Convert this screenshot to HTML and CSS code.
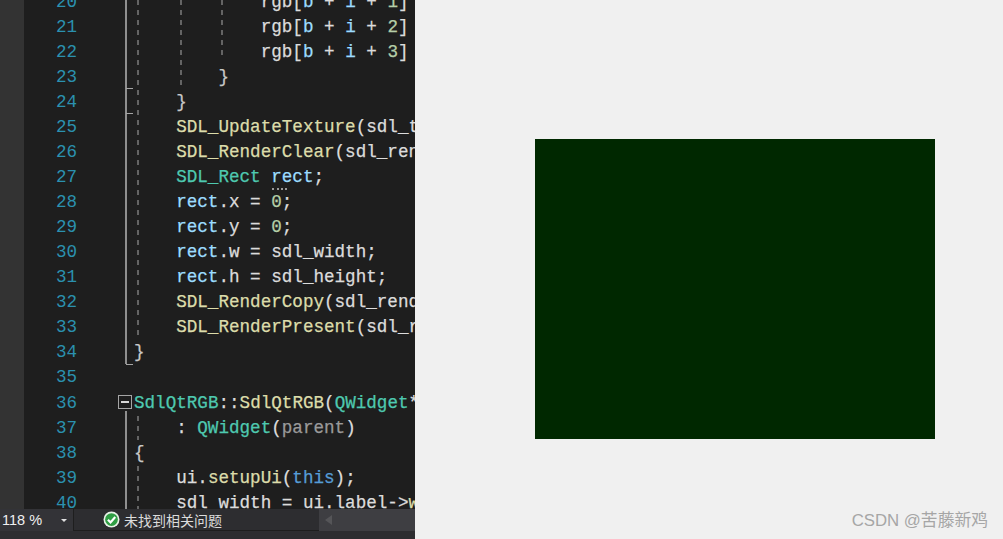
FILE: index.html
```html
<!DOCTYPE html>
<html lang="zh">
<head>
<meta charset="utf-8">
<title>SdlQtRGB</title>
<link rel="stylesheet" href="styles.css">
</head>
<body>
<div class="app">
  <section class="editor">
    <div class="pane">
      <div class="gutter"></div>
      <div class="numbers">
        <div>20</div><div>21</div><div>22</div><div>23</div><div>24</div><div>25</div><div>26</div><div>27</div><div>28</div><div>29</div><div>30</div><div>31</div><div>32</div><div>33</div><div>34</div><div>35</div><div>36</div><div>37</div><div>38</div><div>39</div><div>40</div>
      </div>
      <div class="code">
        <div class="i12">rgb[<span class="v">b</span> + <span class="v">i</span> + <span class="n">1</span>] = 0;</div>
        <div class="i12">rgb[<span class="v">b</span> + <span class="v">i</span> + <span class="n">2</span>] = 0;</div>
        <div class="i12">rgb[<span class="v">b</span> + <span class="v">i</span> + <span class="n">3</span>] = 0;</div>
        <div class="i8 p">}</div>
        <div class="i4 p">}</div>
        <div class="i4"><span class="f">SDL_UpdateTexture</span>(sdl_texture</div>
        <div class="i4"><span class="f">SDL_RenderClear</span>(sdl_render</div>
        <div class="i4"><span class="t">SDL_Rect</span> <span class="v squiggle">rect</span>;</div>
        <div class="i4"><span class="v">rect</span>.x = <span class="n">0</span>;</div>
        <div class="i4"><span class="v">rect</span>.y = <span class="n">0</span>;</div>
        <div class="i4"><span class="v">rect</span>.w = sdl_width;</div>
        <div class="i4"><span class="v">rect</span>.h = sdl_height;</div>
        <div class="i4"><span class="f">SDL_RenderCopy</span>(sdl_render</div>
        <div class="i4"><span class="f">SDL_RenderPresent</span>(sdl_render</div>
        <div class="p">}</div>
        <div>&nbsp;</div>
        <div><span class="t">SdlQtRGB</span>::<span class="f">SdlQtRGB</span>(<span class="t">QWidget</span>* parent)</div>
        <div class="i4">: <span class="t">QWidget</span>(<span class="g">parent</span>)</div>
        <div class="p">{</div>
        <div class="i4">ui.<span class="f">setupUi</span>(<span class="k">this</span>);</div>
        <div class="i4">sdl_width = ui.label-&gt;<span class="f">width</span>();</div>
      </div>
      <i class="fold fold-a"></i>
      <i class="tick tick-a"></i>
      <i class="tick tick-b"></i>
      <i class="tick tick-c"></i>
      <i class="fold fold-b"></i>
      <i class="guide guide-a"></i>
      <i class="guide guide-b"></i>
      <i class="guide guide-c"></i>
      <i class="guide guide-d"></i>
      <i class="guide guide-e"></i>
      <span class="box"><i></i></span>
    </div>
    <footer class="status">
      <div class="status-row">
        <div class="zoom"><span>118 %</span><i class="caret"></i></div>
        <div class="issues">
          <svg class="ok" width="17" height="17" viewBox="0 0 16 16"><circle cx="8" cy="8" r="7.5" fill="#e8f3e8"/><circle cx="8" cy="8" r="6" fill="#2f9e44"/><path d="M4.6 8.2 7.1 10.7 11.5 5.6" fill="none" stroke="#fff" stroke-width="2"/></svg>
          <span>未找到相关问题</span>
        </div>
        <div class="hscroll"><i class="arrow"></i></div>
      </div>
      <div class="status-foot"></div>
    </footer>
  </section>
  <section class="preview">
    <div class="canvas"></div>
    <div class="mark">CSDN @苦藤新鸡</div>
  </section>
</div>
</body>
</html>
```
FILE: styles.css
```css
* { box-sizing: border-box; }
html, body { margin: 0; height: 100%; }
body { background: #f0f0f0; overflow: hidden; }
.app { display: flex; width: 1003px; height: 539px; }

.editor { width: 415px; height: 539px; display: flex; flex-direction: column; background: #1e1e1e; overflow: hidden; }
.pane { position: relative; flex: 1; min-height: 0; display: flex; overflow: hidden; font: 17.6px/25.07px "Liberation Mono", "DejaVu Sans Mono", monospace; }
.gutter { width: 24px; flex: none; background: #333333; }
.numbers { width: 53px; flex: none; margin-top: -10.5px; text-align: right; color: #2b91af; }
.code { flex: none; width: 400px; margin: -10.5px 0 0 57px; color: #dcdcdc; -webkit-text-stroke: 0.25px; }
.code > div { height: 25.07px; white-space: pre; }
.i4 { padding-left: 42.2px; }
.i8 { padding-left: 84.4px; }
.i12 { padding-left: 126.7px; }
.v { color: #9cdcfe; }
.n { color: #b5cea8; }
.f { color: #dcdcaa; }
.t { color: #4ec9b0; }
.k { color: #569cd6; }
.g { color: #9a9a9a; }
.p { color: #c8c8c8; }
.squiggle { position: relative; }
.squiggle::after { content: ""; position: absolute; left: 1px; top: 21px; width: 15px; border-top: 2px dotted #9a9a9a; }

.fold { position: absolute; left: 125px; width: 2px; background: #8f8f8f; }
.fold-a { top: 0; height: 364px; }
.fold-b { top: 411px; height: 98px; }
.tick { position: absolute; left: 126px; width: 7px; height: 1px; background: #a5a5a5; }
.tick-a { top: 88px; }
.tick-b { top: 113px; }
.tick-c { top: 364px; }
.guide { position: absolute; width: 2px; background: repeating-linear-gradient(to bottom, #646464 0 5px, transparent 5px 10px); }
.guide-a { left: 137px; top: 0; height: 338px; }
.guide-b { left: 180px; top: 0; height: 88px; }
.guide-c { left: 221px; top: 0; height: 58px; }
.guide-d { left: 137px; top: 416px; height: 24px; }
.guide-e { left: 137px; top: 466px; height: 43px; }
.box { position: absolute; left: 118px; top: 395px; width: 14px; height: 14px; border: 1px solid #a5a5a5; display: flex; align-items: center; justify-content: center; }
.box i { width: 8px; height: 2px; background: #d8d8d8; }

.status { flex: none; height: 30px; background: #2d2d30; }
.status-row { display: flex; height: 22px; }
.zoom { width: 74px; display: flex; align-items: center; justify-content: space-between; padding: 0 3px 0 2px; background: #333337; border-right: 1px solid #1e1e1e; color: #f0f0f0; font: 14.5px "Liberation Sans", sans-serif; }
.caret { width: 0; height: 0; margin-right: 3px; border: 3px solid transparent; border-top: 3px solid #e0e0e0; border-bottom: 0; }
.issues { width: 245px; display: flex; align-items: center; gap: 4px; padding-left: 29px; background: #2d2d30; border-bottom: 1px solid #1e1e1e; color: #dcdcdc; font: 14px "Noto Sans CJK SC", sans-serif; }
.ok { flex: none; }
.hscroll { flex: 1; display: flex; align-items: center; padding-left: 6px; background: #3e3e42; }
.arrow { width: 0; height: 0; border: 5px solid transparent; border-left: 0; border-right: 7px solid #555558; }
.status-foot { height: 8px; }

.preview { position: relative; flex: 1; padding: 139px 0 0 120px; background: #f0f0f0; }
.canvas { width: 400px; height: 300px; background: #002800; }
.mark { position: absolute; right: 15px; bottom: 8px; color: #a6a6a6; font: 16.8px "Liberation Sans", "Noto Sans CJK SC", sans-serif; }
```
